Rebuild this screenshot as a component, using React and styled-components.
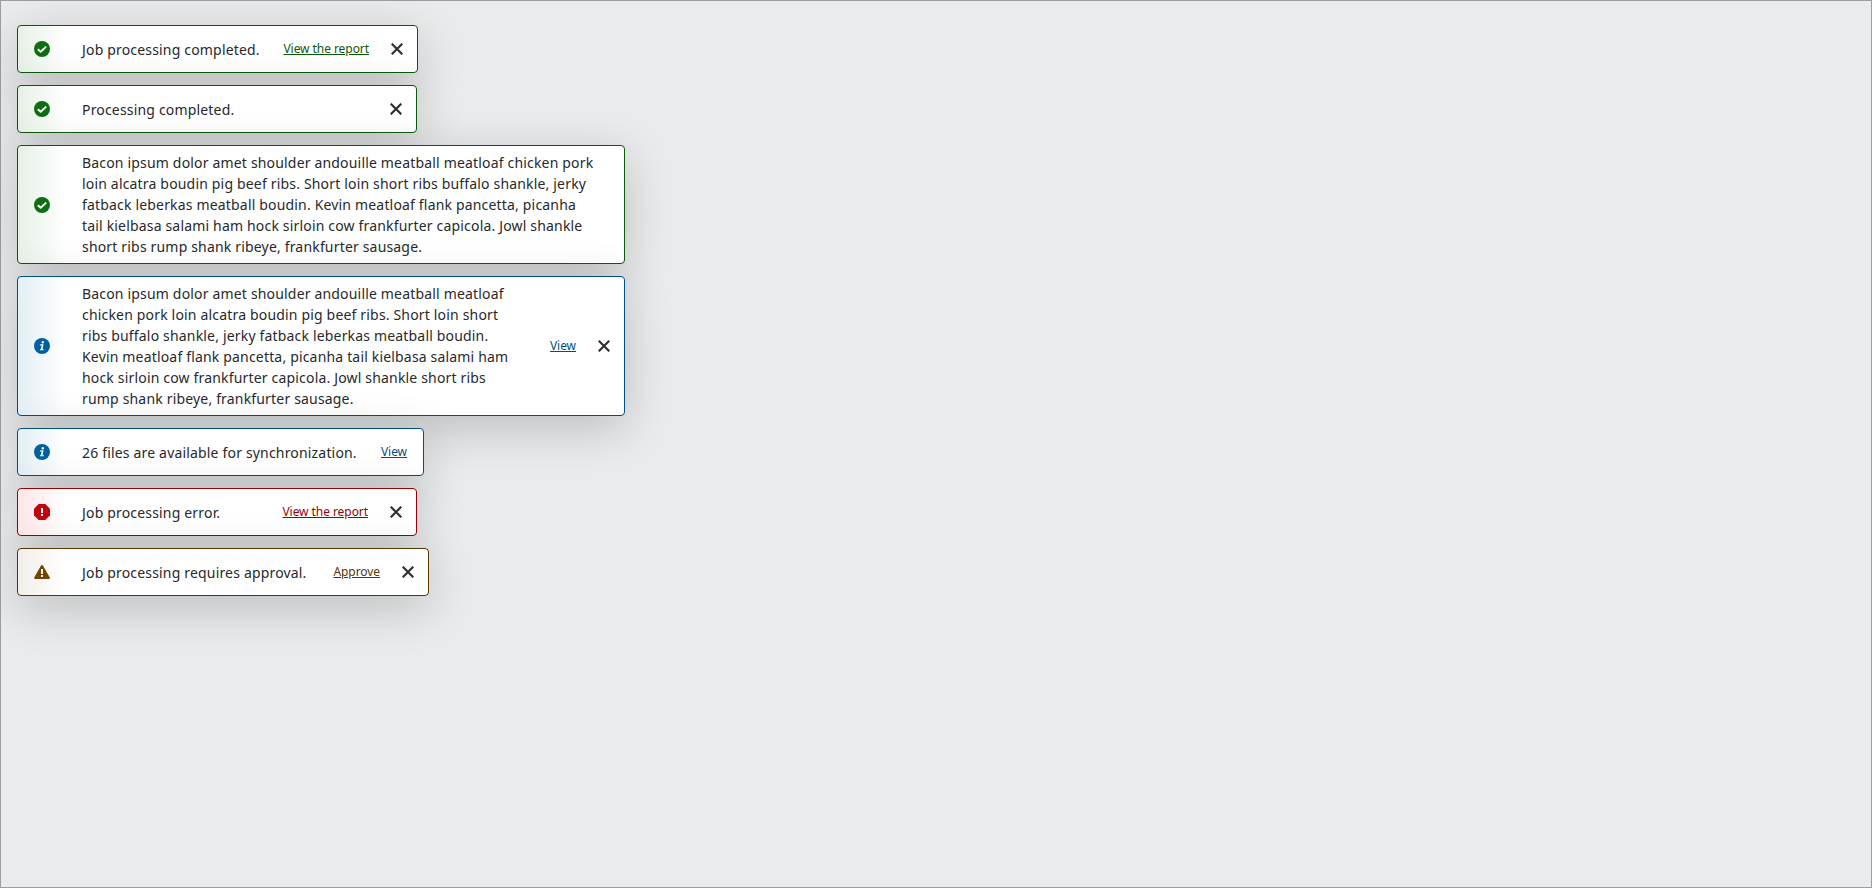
import React from "react";
import styled, { createGlobalStyle } from "styled-components";

const GlobalStyle = createGlobalStyle`
  * { box-sizing: border-box; }
  body { margin: 0; background: #e9ebec; }
`;

const tones = {
  success: { border: "#0b590b", icon: "#0f6e0f", tint: "#e6f0e6" },
  info: { border: "#004f83", icon: "#0060a0", tint: "#e3eef6" },
  error: { border: "#990008", icon: "#c0040a", tint: "#ffe6e6" },
  warning: { border: "#5b3503", icon: "#744404", tint: "#f3eee7" },
};

const Page = styled.main`
  display: flex;
  flex-direction: column;
  align-items: flex-start;
  gap: 12px;
  min-height: 100vh;
  padding: 24px 16px;
  border: 1px solid #9c9ea2;
  background: #e9ebec;
  font-family: "Noto Sans", sans-serif;
`;

const ToastBox = styled.section`
  display: flex;
  align-items: center;
  width: ${(p) => p.$width}px;
  min-height: 48px;
  padding: 6px 0 6px 16px;
  border: 1px solid ${(p) => p.$tone.border};
  border-radius: 4px;
  background: linear-gradient(90deg, ${(p) => p.$tone.tint}, #fff 48px);
  box-shadow: 0 12px 48px rgba(0, 0, 0, 0.2);
`;

const StatusIcon = styled.svg`
  flex: none;
  width: 16px;
  height: 16px;
  margin-right: 32px;
`;

const Message = styled.p`
  flex: 1;
  min-width: 0;
  margin: 0;
  padding: ${(p) => (p.$multiline ? "0" : "1px 0 0")};
  max-width: ${(p) => (p.$maxWidth ? `${p.$maxWidth}px` : "none")};
  color: #28292b;
  font-size: 14px;
  line-height: 21px;
  letter-spacing: 0.175px;
`;

const Action = styled.a`
  flex: none;
  margin-left: auto;
  margin-right: ${(p) => (p.$last ? 16 : 12)}px;
  color: ${(p) => p.$tone.border};
  font-size: 12px;
  line-height: 18px;
  letter-spacing: -0.06px;
  text-decoration: underline;
  cursor: pointer;
`;

const CloseButton = styled.button`
  display: flex;
  align-items: center;
  justify-content: center;
  flex: none;
  width: 32px;
  height: 32px;
  margin-left: ${(p) => (p.$afterAction ? "0" : "auto")};
  margin-right: 4px;
  padding: 0;
  border: 0;
  background: transparent;
  color: #303136;
`;

function StatusGlyph({ type }) {
  const fill = tones[type].icon;
  return (
    <StatusIcon viewBox="0 0 16 16" aria-hidden="true">
      {type === "success" && (
        <>
          <circle cx="8" cy="8" r="8" fill={fill} />
          <path d="M3.8 8.2l2.900 2.600 5.500-5.200" fill="none" stroke="#fff" strokeWidth="1.9" />
        </>
      )}
      {type === "info" && (
        <>
          <circle cx="8" cy="8" r="8" fill={fill} />
          <circle cx="8.8" cy="4.2" r="1.2" fill="#fff" />
          <path d="M6.3 6.3h3.3l-1.1 4.6h1.2l-.3 1.4H6l.3-1.2h.5l.9-3.7H6z" fill="#fff" />
        </>
      )}
      {type === "error" && (
        <>
          <path d="M4.7 0h6.6L16 4.7v6.6L11.3 16H4.7L0 11.3V4.7z" fill={fill} />
          <path d="M7 4h2v5H7zM7 10h2v2H7z" fill="#fff" />
        </>
      )}
      {type === "warning" && (
        <>
          <path d="M8 1c.4 0 .7.2.9.5l6.9 12c.4.7 0 1.5-.8 1.5H1c-.8 0-1.200-.8-.8-1.500l6.900-12C7.300 1.200 7.600 1 8 1z" fill={fill} />
          <path d="M7 5h2v5H7zM7 11h2v2H7z" fill="#fff" />
        </>
      )}
    </StatusIcon>
  );
}

function Toast({ type, width, maxWidth, multiline, action, closable = true, children }) {
  const tone = tones[type];
  return (
    <ToastBox $tone={tone} $width={width} role="status">
      <StatusGlyph type={type} />
      <Message $multiline={multiline} $maxWidth={maxWidth}>{children}</Message>
      {action && <Action $tone={tone} $last={!closable}>{action}</Action>}
      {closable && (
        <CloseButton aria-label="Close" $afterAction={Boolean(action)}>
          <svg width="12" height="12" viewBox="0 0 12 12" aria-hidden="true">
            <path d="M.7.7l10.600 10.600M11.300.7L.7 11.300" stroke="currentColor" strokeWidth="2.2" />
          </svg>
        </CloseButton>
      )}
    </ToastBox>
  );
}

const bacon =
  "Bacon ipsum dolor amet shoulder andouille meatball meatloaf chicken pork loin alcatra boudin pig beef ribs. Short loin short ribs buffalo shankle, jerky fatback leberkas meatball boudin. Kevin meatloaf flank pancetta, picanha tail kielbasa salami ham hock sirloin cow frankfurter capicola. Jowl shankle short ribs rump shank ribeye, frankfurter sausage.";

export default function App() {
  return (
    <>
      <GlobalStyle />
      <Page>
        <Toast type="success" width={401} action="View the report">Job processing completed.</Toast>
        <Toast type="success" width={400}>Processing completed.</Toast>
        <Toast type="success" width={608} multiline maxWidth={518} closable={false}>{bacon}</Toast>
        <Toast type="info" width={608} multiline maxWidth={436} action="View">{bacon}</Toast>
        <Toast type="info" width={407} action="View" closable={false}>26 files are available for synchronization.</Toast>
        <Toast type="error" width={400} action="View the report">Job processing error.</Toast>
        <Toast type="warning" width={412} action="Approve">Job processing requires approval.</Toast>
      </Page>
    </>
  );
}
